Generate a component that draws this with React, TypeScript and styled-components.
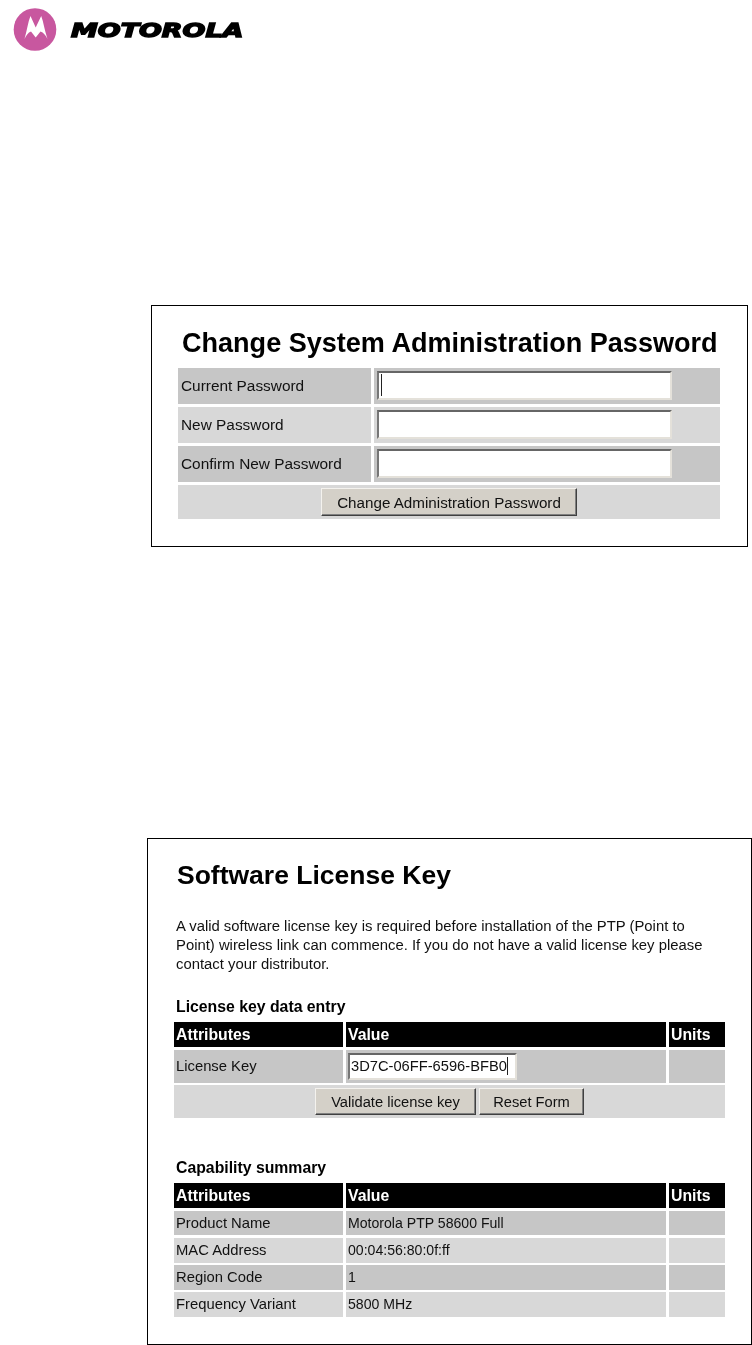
import React from "react";
import styled, { createGlobalStyle, css } from "styled-components";

const GlobalStyle = createGlobalStyle`
  html, body {
    margin: 0;
    padding: 0;
    background: #fff;
    color: #111;
    font-family: "Liberation Sans", Arial, sans-serif;
  }
`;

function Logo(): JSX.Element {
  return (
    <LogoRow>
      <svg width="44" height="44" viewBox="0 0 44 44">
        <circle cx="22" cy="21.5" r="21.3" fill="#c8579f" />
        <path
          d="M11.5 31 C14 22 15 14 17.5 8 L22.7 19.5 L28.2 8 C30.5 14 31.5 22 34.5 31 C32.5 27 30.5 24.5 27.5 23.5 L22.7 29.5 L18 23.5 C15 24.5 13.5 27 11.5 31 Z"
          fill="#fff"
        />
      </svg>
      <Wordmark>MOTOROLA</Wordmark>
    </LogoRow>
  );
}

function PasswordPanel(): JSX.Element {
  const rows = ["Current Password", "New Password", "Confirm New Password"];
  return (
    <PasswordBox>
      <PasswordTitle>Change System Administration Password</PasswordTitle>
      <PasswordGrid>
        {rows.map((label, i) => (
          <PasswordRow key={label} $dark={i % 2 === 0}>
            <PasswordLabel>{label}</PasswordLabel>
            <PasswordField>{i === 0 && <PasswordCaret />}</PasswordField>
          </PasswordRow>
        ))}
        <ButtonRow $height={34}>
          <Button $width={256}>Change Administration Password</Button>
        </ButtonRow>
      </PasswordGrid>
    </PasswordBox>
  );
}

function LicensePanel(): JSX.Element {
  const summary = [
    ["Product Name", "Motorola PTP 58600 Full"],
    ["MAC Address", "00:04:56:80:0f:ff"],
    ["Region Code", "1"],
    ["Frequency Variant", "5800 MHz"],
  ];
  return (
    <LicenseBox>
      <LicenseTitle>Software License Key</LicenseTitle>
      <Intro>
        A valid software license key is required before installation of the PTP (Point to
        <br />
        Point) wireless link can commence. If you do not have a valid license key please
        <br />
        contact your distributor.
      </Intro>
      <SectionTitle>License key data entry</SectionTitle>
      <DataGrid>
        <TableHeader />
        <DataCell $dark $height={33}>License Key</DataCell>
        <FieldCell>
          <LicenseField>
            3D7C-06FF-6596-BFB0
            <Caret />
          </LicenseField>
        </FieldCell>
        <DataCell $dark $height={33} />
        <ButtonRow $height={33} $span>
          <LicenseButton $width={161}>Validate license key</LicenseButton>
          <LicenseButton $width={105}>Reset Form</LicenseButton>
        </ButtonRow>
      </DataGrid>
      <SummaryTitle>Capability summary</SummaryTitle>
      <DataGrid>
        <TableHeader />
        {summary.map(([name, value], i) => (
          <React.Fragment key={name}>
            <DataCell $dark={i % 2 === 0}>{name}</DataCell>
            <ValueCell $dark={i % 2 === 0}>{value}</ValueCell>
            <DataCell $dark={i % 2 === 0} />
          </React.Fragment>
        ))}
      </DataGrid>
    </LicenseBox>
  );
}

function TableHeader(): JSX.Element {
  return (
    <>
      <HeadCell>Attributes</HeadCell>
      <HeadCell>Value</HeadCell>
      <HeadCell>Units</HeadCell>
    </>
  );
}

export default function App(): JSX.Element {
  return (
    <Page>
      <GlobalStyle />
      <Logo />
      <PasswordPanel />
      <LicensePanel />
    </Page>
  );
}

// the reference is a scaled-up screenshot, so its contents are slightly soft
const soft = css`
  filter: blur(0.45px);
`;

const Page = styled.div`
  width: 752px;
  height: 1345px;
  overflow: hidden;
  display: flex;
  flex-direction: column;
`;

const LogoRow = styled.div`
  display: flex;
  align-items: center;
  height: 52px;
  padding: 8px 0 0 13px;
  box-sizing: border-box;
  ${soft}
  svg {
    flex: none;
  }
`;

const Wordmark = styled.span`
  margin-left: 14px;
  font-family: "DejaVu Sans", sans-serif;
  font-weight: 700;
  font-style: italic;
  font-size: 20px;
  line-height: 20px;
  color: #000;
  -webkit-text-stroke: 1.5px #000;
  transform: scaleX(1.345);
  transform-origin: left center;
`;

const PasswordBox = styled.section`
  box-sizing: border-box;
  width: 597px;
  margin: 253px 0 0 151px;
  padding: 0 27px 27px 26px;
  border: 1px solid #000;
`;

const PasswordTitle = styled.h1`
  margin: 0;
  height: 62px;
  padding: 21px 0 0 4px;
  box-sizing: border-box;
  color: #000;
  font-size: 27.05px;
  line-height: 32px;
  font-weight: 700;
  white-space: nowrap;
  ${soft}
`;

const PasswordGrid = styled.div`
  display: flex;
  flex-direction: column;
  gap: 3px;
  ${soft}
`;

const PasswordRow = styled.div<{ $dark: boolean }>`
  display: flex;
  height: 36px;
  background: ${(p) => (p.$dark ? "#c6c6c6" : "#d8d8d8")};
`;

const PasswordLabel = styled.div`
  box-sizing: border-box;
  width: 196px;
  padding-left: 3px;
  border-right: 3px solid #fff;
  font-size: 15.4px;
  line-height: 36px;
`;

const PasswordField = styled.div`
  box-sizing: border-box;
  width: 295px;
  height: 29px;
  margin: 3px 0 0 3px;
  padding: 1px 2px;
  background: #fff;
  border: 2px solid;
  border-color: #666 #e4e1da #e4e1da #777;
`;

const Caret = styled.span`
  display: inline-block;
  width: 1px;
  height: 18px;
  background: #222;
  vertical-align: top;
  margin-top: 2px;
`;

const PasswordCaret = styled(Caret)`
  height: 22px;
  margin-top: 0;
`;

const ButtonRow = styled.div<{ $height: number; $span?: boolean }>`
  display: flex;
  justify-content: center;
  align-items: center;
  gap: 3px;
  height: ${(p) => p.$height}px;
  background: #d8d8d8;
  ${(p) => p.$span && "grid-column: 1 / -1;"}
`;

const Button = styled.button<{ $width: number }>`
  box-sizing: border-box;
  width: ${(p) => p.$width}px;
  height: 28px;
  padding: 0;
  background: #d4d0c8;
  color: #111;
  font-family: inherit;
  font-size: 15.2px;
  border: 1px solid;
  border-color: #f4f2ee #404040 #404040 #f4f2ee;
  box-shadow: inset -1px -1px 0 #808080;
`;

const LicenseButton = styled(Button)`
  height: 27px;
  font-size: 14.7px;
`;

const LicenseBox = styled.section`
  box-sizing: border-box;
  width: 605px;
  height: 507px;
  margin: 291px 0 0 147px;
  padding: 0 26px;
  border: 1px solid #000;
`;

const LicenseTitle = styled.h1`
  margin: 0;
  padding: 20px 0 0 3px;
  color: #000;
  font-size: 26.5px;
  line-height: 32px;
  font-weight: 700;
  ${soft}
`;

const Intro = styled.p`
  margin: 26px 0 0;
  padding-left: 2px;
  font-size: 14.85px;
  line-height: 19px;
  white-space: nowrap;
  ${soft}
`;

const SectionTitle = styled.h2`
  margin: 22px 0 0;
  padding: 0 0 4px 2px;
  color: #000;
  font-size: 15.8px;
  line-height: 22px;
  font-weight: 700;
  ${soft}
`;

const SummaryTitle = styled(SectionTitle)`
  margin-top: 39px;
`;

const DataGrid = styled.div`
  display: grid;
  grid-template-columns: 169px 320px 56px;
  column-gap: 3px;
  row-gap: 2.5px;
  width: 551px;
  ${soft}
`;

const HeadCell = styled.div`
  height: 25px;
  padding-left: 2px;
  background: #000;
  color: #fff;
  font-size: 15.8px;
  font-weight: 700;
  line-height: 25px;
`;

const DataCell = styled.div<{ $dark?: boolean; $height?: number }>`
  height: ${(p) => p.$height ?? 24.8}px;
  padding-left: 2px;
  background: ${(p) => (p.$dark ? "#c6c6c6" : "#d8d8d8")};
  font-size: 14.8px;
  line-height: ${(p) => p.$height ?? 24.8}px;
  white-space: nowrap;
`;

const ValueCell = styled(DataCell)`
  font-size: 14.1px;
`;

const FieldCell = styled.div`
  height: 33px;
  padding: 3px 0 0 2px;
  box-sizing: border-box;
  background: #c6c6c6;
`;

const LicenseField = styled.div`
  box-sizing: border-box;
  width: 169px;
  height: 27px;
  padding: 0 1px;
  background: #fff;
  border: 2px solid;
  border-color: #666 #e4e1da #e4e1da #777;
  font-size: 14.7px;
  line-height: 23px;
  white-space: nowrap;
`;
